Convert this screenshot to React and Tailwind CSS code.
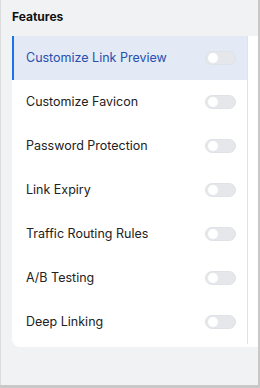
import { useState } from "react";

const features = [
  "Customize Link Preview",
  "Customize Favicon",
  "Password Protection",
  "Link Expiry",
  "Traffic Routing Rules",
  "A/B Testing",
  "Deep Linking",
];

const Toggle = () => (
  <span className="w-[31px] h-[14px] rounded-full bg-[#e5e7eb] border border-[#dfe2e6] flex items-center px-[2px]">
    <span className="w-[10px] h-[10px] rounded-full bg-white" />
  </span>
);

export default function App() {
  const [active] = useState(0);

  return (
    <div className="w-[260px] h-[388px] bg-[#c8c8c8] font-['Inter',sans-serif]">
      <div className="w-[258px] h-[385px] bg-[#f1f2f4] border-l border-[#dcdcdc] flex flex-col">
        <h2 className="px-[11px] pt-[8px] h-[36px] text-[12px] font-bold text-[#111]">
          Features
        </h2>
        <div className="ml-[11px] bg-white rounded-bl-[8px] flex pb-[3px]">
          <ul className="w-[236px] border-r border-[#e2e0ea]">
            {features.map((f, i) => (
              <li
                key={f}
                className={
                  i === active
                    ? "h-[44px] flex items-center justify-between pl-[12px] pr-[11px] bg-[#e3e9f5] border-l-2 border-[#1a73e8] text-[#2650b0]"
                    : "h-[44px] flex items-center justify-between pl-[14px] pr-[11px] text-[#222]"
                }
              >
                <span className="text-[12.5px]">{f}</span>
                <Toggle />
              </li>
            ))}
          </ul>
          <div className="flex-1" />
        </div>
      </div>
    </div>
  );
}
